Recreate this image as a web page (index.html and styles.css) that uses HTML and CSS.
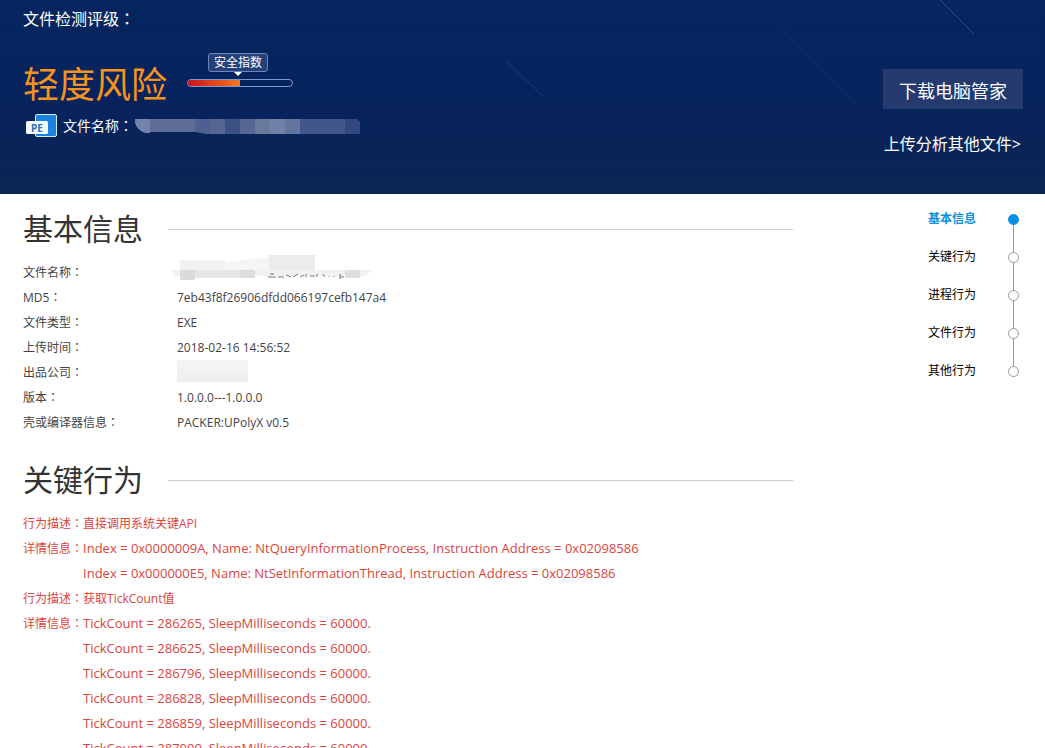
FILE: index.html
```
<!DOCTYPE html>
<html lang="zh-CN">
<head>
	<meta charset="UTF-8">
	<title>文件检测评级</title>
	<link rel="stylesheet" href="styles.css">
</head>
<body>
	<div class="header">
		<!-- 背景流星线 -->
		<svg class="meteor" viewBox="0 0 1045 194" preserveAspectRatio="none" aria-hidden="true">
			<path d="M506 61L543 96" stroke="#28468a" stroke-opacity=".7"/>
			<path d="M780 27L856 103" stroke="#1f3c78" stroke-opacity=".6"/>
			<path d="M940 0L974 34" stroke="#3a5796" stroke-opacity=".7"/>
		</svg>
		<div class="result">
			<h1>文件检测评级<span class="colon" lang="zh-TW">：</span></h1>
			<div class="level">
				<strong>轻度风险</strong>
				<div class="safe">
					<span class="safe-tip">安全指数</span>
					<div class="safe-bar"><div class="safe-val"></div></div>
				</div>
			</div>
			<div class="file">
				<svg class="pe" width="32" height="24" viewBox="0 0 32 24">
					<rect x="9.500" y=".5" width="21" height="22" rx="1.500" fill="#1c82e0" stroke="#d8ecff"/>
					<rect x="0" y="7" width="22" height="13" rx="1.500" fill="#f4faff"/>
					<text x="11" y="17.500" text-anchor="middle" class="pe-text">PE</text>
				</svg>
				<span>文件名称<span class="colon" lang="zh-TW">：</span></span>
				<svg class="mosaic" width="226" height="16" viewBox="0 0 226 16" aria-hidden="true">
					<path d="M0 1H15V15H10Q2 12 0 5z" fill="#7582ab"/>
					<path d="M15 1H60V14H15z" fill="#5f6d96"/>
					<path d="M60 1H75V16H71L60 14z" fill="#4e6091"/>
					<path d="M75 1H90V16H75z" fill="#546590"/>
					<path d="M90 1H105V16H90z" fill="#3d5084"/>
					<path d="M105 1H120V16H105z" fill="#566793"/>
					<path d="M120 1H135V16H120z" fill="#677a9e"/>
					<path d="M135 1H150V16H135z" fill="#7083a7"/>
					<path d="M150 1H165V16H150z" fill="#63749d"/>
					<path d="M165 1H210V16H165z" fill="#42568a"/>
					<path d="M210 1H222L225 4V16H210z" fill="#334780"/>
				</svg>
			</div>
		</div>
		<div class="action">
			<button type="button">下载电脑管家</button>
			<a href="#">上传分析其他文件&gt;</a>
		</div>
	</div>

	<div class="main">
		<div class="content">
			<div class="section" id="base">
				<h2>基本信息</h2>
				<table class="info">
					<tr>
						<th>文件名称<span class="colon" lang="zh-TW">：</span></th>
						<td>
							<svg class="mosaic" width="200" height="25" viewBox="0 0 200 25" aria-hidden="true">
								<path d="M3 0H48V15H3z" fill="#f0f1f1"/>
								<path d="M48 2L92 -3V15H48z" fill="#f5f5f5"/>
								<path d="M92 -5H138V10H92z" fill="#ebecec"/>
								<path d="M-7 10H195L188 16H-2z" fill="#f1f1f1"/>
								<path d="M3 10H18V20H3z" fill="#dcdbdc"/>
								<path d="M18 10H63V18H18z" fill="#e7e6e7"/>
								<path d="M63 10H78V18H63z" fill="#dedbdc"/>
								<path d="M168 10H183V18H168z" fill="#dfdfdf"/>
								<path d="M91 17H99M93 14H97M101 17H107M109 15L114 17M116 17L121 14M123 17L127 15M129 14V17M133 16H138M140 14V17M146 14L148 17M152 16V17M157 17V16M163 14V19M163 17H167" stroke="#777" fill="none"/>
							</svg>
						</td>
					</tr>
					<tr><th>MD5<span class="colon" lang="zh-TW">：</span></th><td>7eb43f8f26906dfdd066197cefb147a4</td></tr>
					<tr><th>文件类型<span class="colon" lang="zh-TW">：</span></th><td>EXE</td></tr>
					<tr><th>上传时间<span class="colon" lang="zh-TW">：</span></th><td>2018-02-16 14:56:52</td></tr>
					<tr><th>出品公司<span class="colon" lang="zh-TW">：</span></th><td><div class="cover"></div></td></tr>
					<tr><th>版本<span class="colon" lang="zh-TW">：</span></th><td>1.0.0.0---1.0.0.0</td></tr>
					<tr><th>壳或编译器信息<span class="colon" lang="zh-TW">：</span></th><td>PACKER:UPolyX v0.5</td></tr>
				</table>
			</div>
			<div class="section" id="key">
				<h2>关键行为</h2>
				<table class="behavior">
					<tr><th>行为描述<span class="colon" lang="zh-TW">：</span></th><td>直接调用系统关键API</td></tr>
					<tr>
						<th>详情信息<span class="colon" lang="zh-TW">：</span></th>
						<td>
							<p>Index = 0x0000009A, Name: NtQueryInformationProcess, Instruction Address = 0x02098586</p>
							<p>Index = 0x000000E5, Name: NtSetInformationThread, Instruction Address = 0x02098586</p>
						</td>
					</tr>
					<tr><th>行为描述<span class="colon" lang="zh-TW">：</span></th><td>获取TickCount值</td></tr>
					<tr>
						<th>详情信息<span class="colon" lang="zh-TW">：</span></th>
						<td>
							<p>TickCount = 286265, SleepMilliseconds = 60000.</p>
							<p>TickCount = 286625, SleepMilliseconds = 60000.</p>
							<p>TickCount = 286796, SleepMilliseconds = 60000.</p>
							<p>TickCount = 286828, SleepMilliseconds = 60000.</p>
							<p>TickCount = 286859, SleepMilliseconds = 60000.</p>
							<p>TickCount = 287000, SleepMilliseconds = 60000.</p>
						</td>
					</tr>
				</table>
			</div>
		</div>
		<ul class="nav">
			<li class="on"><a href="#base">基本信息</a></li>
			<li><a href="#key">关键行为</a></li>
			<li><a href="#process">进程行为</a></li>
			<li><a href="#file">文件行为</a></li>
			<li><a href="#other">其他行为</a></li>
		</ul>
	</div>
</body>
</html>
```
FILE: styles.css
```
*{margin: 0;padding: 0;list-style: none;box-sizing: border-box;}
body{font: 12px/25px "Open Sans","Noto Sans CJK SC",sans-serif;color: #444;background: #fff;}
a{text-decoration: none;color: inherit;}
.colon{font-family: "Noto Sans CJK TC",sans-serif;line-height: 1;}

/* 头部 */
.header{display: flex;justify-content: space-between;min-height: 194px;padding: 7px 22px 0 23px;background: linear-gradient(#06265f,#07235d 50%,#0b2553);color: #fff;position: relative;}
.meteor{width: 100%;height: 100%;position: absolute;top: 0;left: 0;fill: none;}
.result,.action{position: relative;}
.result h1{font-size: 16px;line-height: 24px;font-weight: normal;}
.level{display: flex;gap: 20px;height: 61px;margin-top: 22px;}
.level strong{padding-top: 4px;font-size: 36px;line-height: 56px;font-weight: normal;color: #f7941d;}
.safe{width: 106px;}
.safe-tip{display: block;width: 60px;height: 19px;margin: 0 0 7px 21px;border: 1px solid #6f86bb;border-radius: 3px;background: #26407a;line-height: 17px;text-align: center;position: relative;}
.safe-tip:after{content: "";position: absolute;left: 25px;top: 18px;border: 4px solid transparent;border-top-color: #fff;border-bottom: 0;}
.safe-bar{height: 8px;border: 1px solid #7f97d0;border-radius: 4px;overflow: hidden;}
.safe-val{width: 50%;height: 6px;background: linear-gradient(90deg,#c9141c,#f4791f);}
.file{display: flex;align-items: center;font-size: 14px;line-height: 24px;padding-left: 3px;}
.pe{margin-right: 5px;}
.pe-text{font: bold 10px "Open Sans",sans-serif;fill: #2a6fb5;}
.file .mosaic{margin-left: 2px;}
.action{display: flex;flex-direction: column;align-items: flex-end;padding-top: 62px;}
.action button{width: 140px;height: 40px;padding-top: 4px;border: 0;background: #253b70;color: #fff;font: 18px/36px "Open Sans","Noto Sans CJK SC",sans-serif;cursor: pointer;}
.action a{margin: 23px 2px 0 0;font-size: 16px;line-height: 24px;}

/* 内容 */
.main{display: flex;padding: 15px 25px 0 23px;}
.content{flex: 1;margin-right: 135px;}
.section{margin-bottom: 25px;}
.section h2{display: flex;align-items: center;margin-bottom: 11px;font-size: 30px;line-height: 40px;font-weight: normal;color: #333;}
.section h2:after{content: "";flex: 1;height: 1px;margin-left: 25px;background: #ccc;}
table{border-collapse: collapse;}
th{font-weight: normal;text-align: left;vertical-align: top;white-space: nowrap;}
.info tr{height: 25px;}
.info th{width: 154px;}
.info .mosaic{display: block;overflow: visible;}
.cover{width: 71px;height: 22px;margin-bottom: 3px;background: linear-gradient(#f5f5f5,#ededed);}
.behavior{color: #d9453d;}
.behavior th{width: 60px;}
.behavior p{font-size: 13px;}

/* 右侧导航 */
.nav{width: 92px;color: #000;}
.nav li{height: 38px;line-height: 20px;position: relative;}
.nav li a{display: block;}
.nav li:before{content: "";width: 1px;height: 38px;background: #999;position: absolute;right: 6px;top: 10px;}
.nav li:last-child:before{display: none;}
.nav li:after{content: "";box-sizing: border-box;width: 11px;height: 11px;border: 1px solid #999;border-radius: 50%;background: #fff;position: absolute;right: 1px;top: 5px;}
.nav .on{color: #0a8fdc;font-weight: bold;}
.nav .on:after{background: #0a8fe8;border-color: #0a8fe8;}
```
